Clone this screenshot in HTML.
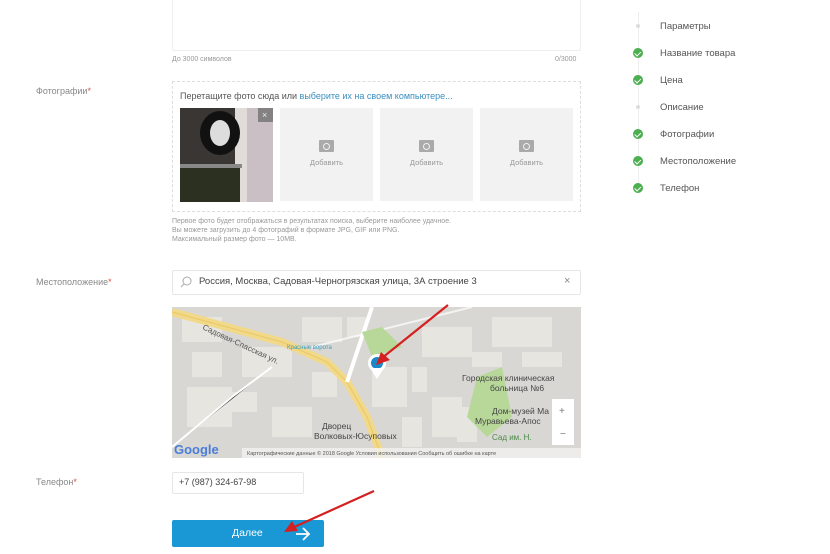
<!DOCTYPE html>
<html><head><meta charset="utf-8"><style>
*{box-sizing:border-box;margin:0;padding:0}
body{width:830px;height:554px;background:#fff;font-family:"Liberation Sans","Noto Sans CJK SC",sans-serif;color:#555;position:relative;overflow:hidden}
.a{position:absolute}
.lbl{font-size:9px;color:#888}
.lbl b{color:#e0504a;font-weight:normal}
.thumb{position:absolute;top:108px;width:93px;height:93px;background:#f2f2f2;text-align:center;font-size:7.5px;color:#999}
.thumb .cam{width:15px;height:12px;background:#aaa;border-radius:1px;margin:32px auto 6px;position:relative}
.thumb .cam:after{content:"";position:absolute;left:4px;top:2.5px;width:5px;height:5px;border:1.4px solid #f2f2f2;border-radius:50%}
.side{font-size:9.5px;color:#555}
.dot{position:absolute;left:633px;width:10px;height:10px;border-radius:50%;background:#4caf50}
.dot:after{content:"";position:absolute;left:3px;top:1.8px;width:2.5px;height:4.5px;border:solid #fff;border-width:0 1.4px 1.4px 0;transform:rotate(45deg)}
.gd{position:absolute;left:636px;width:4px;height:4px;border-radius:50%;background:#ddd}
</style></head><body>
<div class="a" style="left:172px;top:-2px;width:409px;height:53px;border:1px solid #eee;border-radius:2px"></div>
<div class="a" style="left:172px;top:56px;font-size:7px;color:#999">До 3000 символов</div>
<div class="a" style="left:555px;top:56px;font-size:7px;color:#999">0/3000</div>

<div class="a lbl" style="left:36px;top:86px">Фотографии<b>*</b></div>
<div class="a" style="left:172px;top:81px;width:409px;height:131px;border:1px dashed #ddd"></div>
<div class="a" style="left:180px;top:91px;font-size:9px;color:#555">Перетащите фото сюда или <span style="color:#3a8fc0">выберите их на своем компьютере...</span></div>
<svg class="a" style="left:180px;top:108px" width="93" height="94">
<rect width="93" height="94" fill="#3a3634"/>
<rect x="60" y="0" width="33" height="94" fill="#c9bfc4"/>
<rect x="55" y="0" width="12" height="94" fill="#e2dcd8"/>
<ellipse cx="40" cy="25" rx="20" ry="22" fill="#111"/>
<ellipse cx="40" cy="25" rx="10" ry="13" fill="#ddd"/>
<rect x="0" y="60" width="60" height="34" fill="#2c3020"/>
<rect x="0" y="56" width="62" height="4" fill="#888"/>
<rect x="78" y="0" width="15" height="14" fill="#666" opacity=".7"/>
<text x="82" y="10" font-size="9" fill="#eee">×</text>
</svg>
<div class="thumb" style="left:280px"><div class="cam"></div>Добавить</div>
<div class="thumb" style="left:380px"><div class="cam"></div>Добавить</div>
<div class="thumb" style="left:480px"><div class="cam"></div>Добавить</div>
<div class="a" style="left:172px;top:217px;font-size:7px;color:#999;line-height:9px">Первое фото будет отображаться в результатах поиска, выберите наиболее удачное.<br>Вы можете загрузить до 4 фотографий в формате JPG, GIF или PNG.<br>Максимальный размер фото — 10MB.</div>

<div class="a lbl" style="left:36px;top:277px">Местоположение<b>*</b></div>
<div class="a" style="left:172px;top:270px;width:409px;height:25px;border:1px solid #e6e6e6;border-radius:2px"></div>
<svg class="a" style="left:180px;top:276px" width="12" height="12"><circle cx="7" cy="5" r="4" fill="none" stroke="#aaa" stroke-width="1"/><line x1="4" y1="8" x2="1" y2="11" stroke="#aaa"/></svg>
<div class="a" style="left:199px;top:276px;font-size:9.5px;color:#444">Россия, Москва, Садовая-Черногрязская улица, 3А строение 3</div>
<div class="a" style="left:564px;top:275px;font-size:11px;color:#888">×</div>

<svg class="a" style="left:172px;top:307px" width="409" height="151">
<rect width="409" height="151" fill="#d9d7d3"/>
<g fill="#e7e5e0">
<rect x="10" y="10" width="40" height="25"/><rect x="70" y="40" width="50" height="30"/><rect x="15" y="80" width="45" height="40"/><rect x="130" y="10" width="40" height="25"/><rect x="200" y="60" width="35" height="40"/><rect x="250" y="20" width="50" height="30"/><rect x="260" y="90" width="30" height="40"/><rect x="320" y="10" width="60" height="30"/><rect x="100" y="100" width="40" height="30"/><rect x="230" y="110" width="20" height="30"/>
<rect x="60" y="85" width="25" height="20"/><rect x="140" y="65" width="25" height="25"/><rect x="240" y="60" width="15" height="25"/><rect x="300" y="45" width="30" height="15"/><rect x="350" y="45" width="40" height="15"/><rect x="20" y="45" width="30" height="25"/><rect x="175" y="10" width="20" height="20"/><rect x="285" y="100" width="20" height="35"/>
</g>
<path d="M0 5 L110 35 L155 55 L175 75 L195 110 L210 151" stroke="#f2d98a" stroke-width="8" fill="none"/>
<path d="M0 5 L110 35 L155 55 L175 75 L195 110 L210 151" stroke="#e8c866" stroke-width="1" fill="none"/>
<path d="M175 75 L200 0" stroke="#fff" stroke-width="4"/>
<path d="M140 40 L300 0" stroke="#fff" stroke-width="2" opacity=".7"/>
<path d="M0 140 L60 90 L100 60" stroke="#fff" stroke-width="2"/>
<path d="M190 25 L210 20 L230 40 L200 50Z" fill="#b8d89a"/>
<path d="M305 70 L330 60 L340 110 L315 130 L295 110Z" fill="#b8d89a"/>
<circle cx="205" cy="56" r="9" fill="#fff"/><circle cx="205" cy="56" r="6" fill="#1a88c9"/>
<path d="M198 61 L205 72 L212 61Z" fill="#fff"/>
<text x="30" y="22" font-size="8" fill="#555" transform="rotate(25 30 22)">Садовая-Спасская ул.</text>
<text x="115" y="42" font-size="6" fill="#3a9ec0">Красные ворота</text>
<text x="290" y="74" font-size="8.5" fill="#444">Городская клиническая</text>
<text x="318" y="84" font-size="8.5" fill="#444">больница №6</text>
<text x="320" y="107" font-size="8.5" fill="#444">Дом-музей Ма</text>
<text x="303" y="117" font-size="8.5" fill="#444">Муравьева-Апос</text>
<text x="320" y="133" font-size="8" fill="#4a8a4a">Сад им. Н.</text>
<text x="150" y="122" font-size="8.5" fill="#444">Дворец</text>
<text x="142" y="132" font-size="8.5" fill="#444">Волковых-Юсуповых</text>
<rect x="380" y="92" width="22" height="46" fill="#fff"/>
<text x="387" y="107" font-size="10" fill="#777">+</text><text x="388" y="130" font-size="10" fill="#777">−</text>
<rect x="70" y="141" width="339" height="10" fill="#f1f1f1" opacity=".8"/>
<text x="75" y="148" font-size="5.5" fill="#555">Картографические данные © 2018 Google    Условия использования    Сообщить об ошибке на карте</text>
<text x="2" y="147" font-size="13" fill="#4a7ed8" font-weight="bold">Google</text>
</svg>
<svg class="a" style="left:370px;top:303px" width="80" height="65"><line x1="78" y1="2" x2="12" y2="55" stroke="#d42020" stroke-width="2.2"/><path d="M6 62 L20 57 L11 49Z" fill="#d42020"/></svg>

<div class="a lbl" style="left:36px;top:477px">Телефон<b>*</b></div>
<div class="a" style="left:172px;top:472px;width:132px;height:22px;border:1px solid #e6e6e6;border-radius:2px"></div>
<div class="a" style="left:179px;top:477px;font-size:9px;color:#444">+7 (987) 324-67-98</div>

<div class="a" style="left:172px;top:520px;width:152px;height:27px;background:#1a97d5;border-radius:2px"></div>
<div class="a" style="left:232px;top:527px;font-size:10.5px;color:#fff">Далее</div>
<svg class="a" style="left:295px;top:527px" width="16" height="14"><path d="M1 7 H14 M8 1 L14 7 L8 13" stroke="#fff" stroke-width="1.8" fill="none"/></svg>
<svg class="a" style="left:278px;top:488px" width="100" height="50"><line x1="96" y1="3" x2="14" y2="40" stroke="#d42020" stroke-width="2.2"/><path d="M6 44 L20 43 L14 33Z" fill="#d42020"/></svg>

<div class="a" style="left:638px;top:12px;width:1px;height:180px;background:#eee"></div>
<div class="gd" style="top:24px"></div><div class="a side" style="left:660px;top:21px">Параметры</div>
<div class="dot" style="top:48px"></div><div class="a side" style="left:660px;top:48px">Название товара</div>
<div class="dot" style="top:75px"></div><div class="a side" style="left:660px;top:75px">Цена</div>
<div class="gd" style="top:105px"></div><div class="a side" style="left:660px;top:102px">Описание</div>
<div class="dot" style="top:129px"></div><div class="a side" style="left:660px;top:129px">Фотографии</div>
<div class="dot" style="top:156px"></div><div class="a side" style="left:660px;top:156px">Местоположение</div>
<div class="dot" style="top:183px"></div><div class="a side" style="left:660px;top:183px">Телефон</div>
</body></html>
